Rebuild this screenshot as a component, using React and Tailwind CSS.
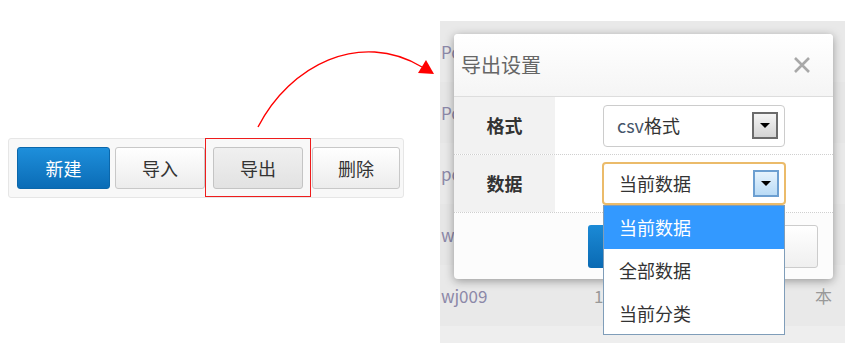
const font = { fontFamily: '"Noto Sans CJK SC", "Liberation Sans", sans-serif' };

const bgRows = [
  { left: "Pc", mid: "", right: "本" },
  { left: "Pc", mid: "", right: "合" },
  { left: "pc", mid: "", right: "本" },
  { left: "w", mid: "", right: "日" },
  { left: "wj009", mid: "1", right: "本" },
];

function ArrowBox({ active }) {
  return (
    <span
      className={`flex h-[27px] w-[26px] items-center justify-center border-2 ${
        active
          ? "border-[#6c9fd1] bg-gradient-to-b from-[#e6f3fd] to-[#b9dbf6]"
          : "border-[#6b6b6b] bg-gradient-to-b from-[#f4f4f4] to-[#d4d4d4]"
      }`}
    >
      <span className="h-0 w-0 border-x-[5px] border-t-[5px] border-x-transparent border-t-black" />
    </span>
  );
}

function ToolButton({ children, primary, pressed }) {
  return (
    <button
      className={`h-[42px] rounded-[3px] border text-[18px] ${
        primary
          ? "border-[#0a67ab] bg-gradient-to-b from-[#1e8fdb] to-[#0a6cb6] text-white"
          : pressed
          ? "border-[#c4c4c4] bg-gradient-to-b from-[#f0f0f0] to-[#e2e2e2] text-[#333]"
          : "border-[#c8c8c8] bg-gradient-to-b from-white to-[#ececec] text-[#333]"
      }`}
    >
      {children}
    </button>
  );
}

export default function App() {
  return (
    <div className="relative flex h-[356px] w-[852px] bg-white" style={font}>
      {/* toolbar */}
      <div className="w-[440px] pl-2 pt-[138px]">
        <div className="flex h-[60px] w-[396px] items-center rounded-[3px] border border-[#e6e6e6] bg-[#f8f8f8] pl-2">
          <div className="w-[91px]">
            <ToolButton primary>
              <span className="block w-[91px]">新建</span>
            </ToolButton>
          </div>
          <div className="ml-[7px] w-[90px]">
            <ToolButton>
              <span className="block w-[88px]">导入</span>
            </ToolButton>
          </div>
          <div className="relative ml-2 w-[90px]">
            <ToolButton pressed>
              <span className="block w-[88px]">导出</span>
            </ToolButton>
            <div className="pointer-events-none absolute -bottom-[8px] -left-[8px] -right-[8px] -top-[9px] border-[1.5px] border-[#ee1c1c]" />
          </div>
          <div className="ml-[9px] w-[88px]">
            <ToolButton>
              <span className="block w-[86px]">删除</span>
            </ToolButton>
          </div>
        </div>
      </div>

      {/* panel */}
      <div className="relative mt-[21px] h-[322px] w-[405px] overflow-hidden bg-[#e8e8e8]">
        {bgRows.map((r, i) => (
          <div
            key={i}
            className={`flex h-[61px] items-center text-[17px] text-[#8c88a8] ${
              i % 2 ? "bg-[#e6e6e6]" : "bg-[#e9e9e9]"
            }`}
          >
            <span className="w-[154px] pl-[1px]">{r.left}</span>
            <span className="w-[221px] text-[#999]">{r.mid}</span>
            <span className="text-[#999]">{r.right}</span>
          </div>
        ))}
        <div className="h-[20px] bg-[#eeeeee]" />

        {/* dialog */}
        <div className="absolute left-[14px] top-[13px] flex h-[245px] w-[379px] flex-col rounded-[4px] bg-[#fcfcfc] shadow-[0_2px_10px_rgba(0,0,0,0.35)]">
          <div className="flex h-[63px] items-center justify-between rounded-t-[4px] border-b border-[#dddddd] bg-gradient-to-b from-white to-[#f5f5f5] pl-[7px] pr-[22px]">
            <span className="text-[20px] text-[#666]">导出设置</span>
            <svg width="18" height="18" viewBox="0 0 18 18">
              <path d="M2 2L16 16M16 2L2 16" stroke="#a8a8a8" strokeWidth="2.6" />
            </svg>
          </div>

          <div className="flex h-[58px] border-b border-dotted border-[#cfcfcf] bg-white">
            <div className="flex w-[101px] items-center justify-center bg-[#f2f2f2] text-[18px] font-bold text-[#333]">
              格式
            </div>
            <div className="flex flex-1 items-center justify-center">
              <div className="flex h-[42px] w-[182px] items-center justify-between rounded-[4px] border border-[#cccccc] bg-white pl-[13px] pr-[6px] text-[18px] text-[#333]">
                <span>
                  <span className="text-[#45556a]">csv</span>格式
                </span>
                <ArrowBox />
              </div>
            </div>
          </div>

          <div className="flex h-[58px] border-b border-dotted border-[#cfcfcf] bg-white">
            <div className="flex w-[101px] items-center justify-center bg-[#f2f2f2] text-[18px] font-bold text-[#333]">
              数据
            </div>
            <div className="flex flex-1 items-center justify-center">
              <div className="relative h-[43px] w-[184px]">
                <div className="flex h-[43px] items-center justify-between rounded-[4px] border-2 border-[#ebbb6a] bg-white pl-[15px] pr-[5px] text-[18px] text-[#333]">
                  <span>当前数据</span>
                  <ArrowBox active />
                </div>
                <div className="absolute left-[1px] top-[43px] z-10 w-[182px] border border-[#7f9db9] bg-white text-[18px] text-[#333]">
                  <div className="flex h-[43px] items-center bg-[#3399ff] pl-[15px] text-white">当前数据</div>
                  <div className="flex h-[43px] items-center pl-[15px]">全部数据</div>
                  <div className="flex h-[42px] items-center pl-[15px]">当前分类</div>
                </div>
              </div>
            </div>
          </div>

          {/* footer buttons, mostly hidden under the open list */}
          <div className="flex flex-1 items-center justify-end gap-2 pr-[15px]">
            <button className="h-[43px] w-[111px] rounded-[3px] bg-gradient-to-b from-[#1b8ad6] to-[#0a6ab3]" />
            <button className="h-[43px] w-[111px] rounded-[3px] border border-[#cccccc] bg-gradient-to-b from-white to-[#efefef]" />
          </div>
        </div>
      </div>

      {/* curved arrow */}
      <svg className="pointer-events-none absolute left-0 top-0" width="852" height="356">
        <path d="M258 127 C 290 65, 360 30, 422 67" fill="none" stroke="#ff0000" strokeWidth="1.4" />
        <polygon points="434,74 418,73 426,60" fill="#ff0000" />
      </svg>
    </div>
  );
}
